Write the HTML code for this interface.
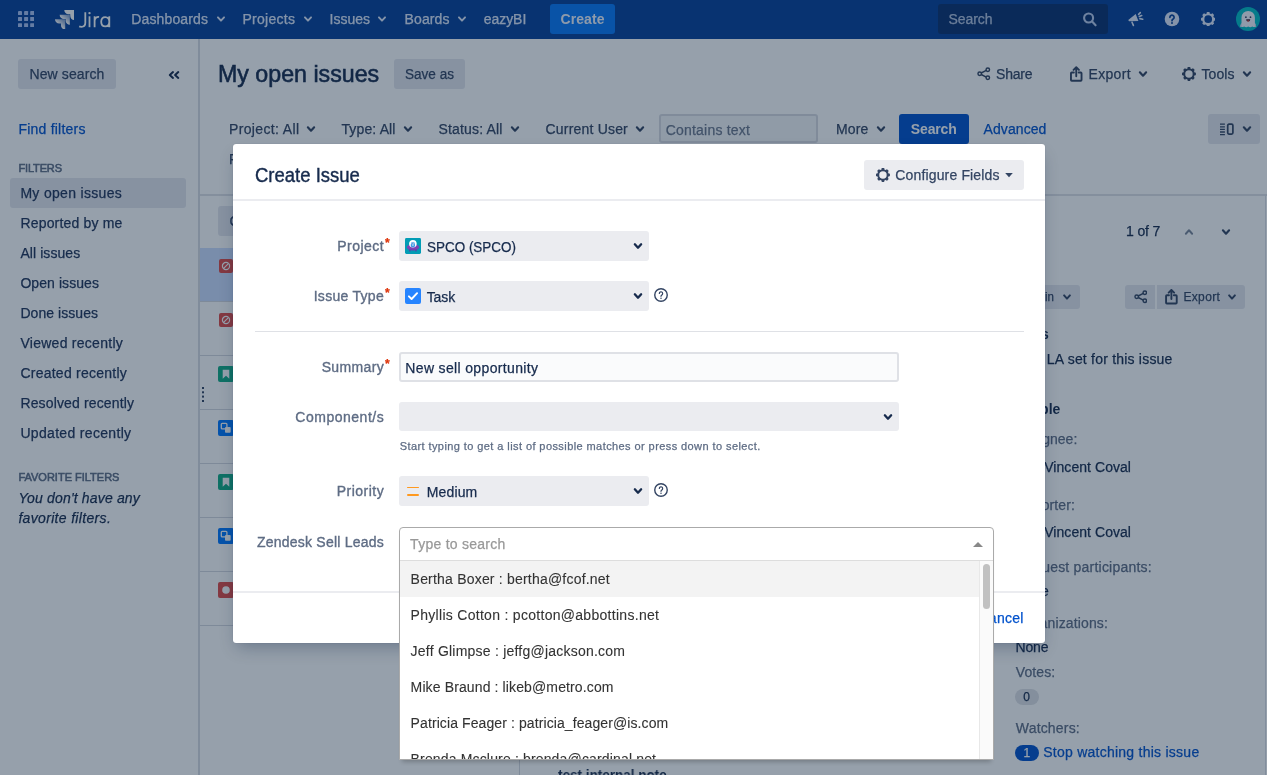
<!DOCTYPE html>
<html><head><meta charset="utf-8"><title>Create Issue - Jira</title>
<style>
*{box-sizing:border-box;margin:0;padding:0}
html,body{width:1267px;height:775px;overflow:hidden;background:#fff}
body{font-family:"Liberation Sans",sans-serif;font-size:14px;color:#172b4d;position:relative}
.t{position:absolute;white-space:nowrap;-webkit-text-stroke:.25px}
.b{position:absolute;display:block}
#page,#fg{will-change:transform}
#blanket{position:absolute;left:0;top:0;width:1267px;height:775px;background:rgba(11,34,60,0.43)}
#dlg{position:absolute;left:233px;top:144px;width:812px;height:498.700px;background:#fff;border-radius:3px;box-shadow:0 8px 16px -4px rgba(9,30,66,.3),0 0 1px rgba(9,30,66,.31)}
#drop{position:absolute;left:399px;top:527px;width:595px;height:232.500px;background:#fff;border:1px solid #aaa;border-radius:4px 4px 0 0;box-shadow:0 5px 4px -3px rgba(0,0,0,.22);overflow:hidden}
</style></head><body>
<div id="page">
<div class="b" style="left:0px;top:0px;width:1267px;height:39px;background:#064099;"></div>
<svg class="b" style="left:18px;top:11px" width="16.2" height="16.2" viewBox="0 0 16.2 16.2" fill="#a9c1f3"><rect x="0" y="0" width="4" height="4" rx=".5"/><rect x="6.1" y="0" width="4" height="4" rx=".5"/><rect x="12.2" y="0" width="4" height="4" rx=".5"/><rect x="0" y="6.1" width="4" height="4" rx=".5"/><rect x="6.1" y="6.1" width="4" height="4" rx=".5"/><rect x="12.2" y="6.1" width="4" height="4" rx=".5"/><rect x="0" y="12.2" width="4" height="4" rx=".5"/><rect x="6.1" y="12.2" width="4" height="4" rx=".5"/><rect x="12.2" y="12.2" width="4" height="4" rx=".5"/></svg>
<svg class="b" style="left:54.7px;top:9.7px" width="19.5" height="19.5" viewBox="0 0 24.013 24" ><defs><linearGradient id="lg1" x1="0.95" y1="0.05" x2="0.45" y2="0.6"><stop offset="0.18" stop-color="#fff" stop-opacity=".55"/><stop offset="1" stop-color="#fff" stop-opacity="1"/></linearGradient></defs><path d="M23.013 0H11.455a5.215 5.215 0 0 0 5.215 5.215h2.129v2.057A5.215 5.215 0 0 0 24.013 12.483V1.005A1.001 1.001 0 0 0 23.013 0z" fill="#fff"/><path d="M17.294 5.757H5.736a5.215 5.215 0 0 0 5.215 5.214h2.129v2.058a5.218 5.218 0 0 0 5.215 5.214V6.758a1.001 1.001 0 0 0-1.001-1.001z" fill="url(#lg1)"/><path d="M11.571 11.513H0a5.218 5.218 0 0 0 5.232 5.215h2.130v2.057A5.215 5.215 0 0 0 12.575 24V12.518a1.005 1.005 0 0 0-1.005-1.005z" fill="url(#lg1)"/></svg>
<svg class="b" style="left:78px;top:9.8px" width="34" height="20" viewBox="0 0 34 20" ><g fill="none" stroke="#fff" stroke-width="1.800" stroke-linecap="butt"><path d="M7.300 2.300v10.500c0 2.600-1.500 4-3.800 4-.9 0-1.700-.1-2.300-.400"/><path d="M11.500 6.300v10.900"/><path d="M16.600 6.300v10.900M16.600 10.700c.400-2.600 2-4 4.500-3.800"/><path d="M31.300 6.300v10.900M31.300 11.800c0-2.900-1.600-4.700-4-4.700s-4.100 1.900-4.100 4.700 1.700 4.600 4.100 4.600 4-1.800 4-4.600z"/></g><circle cx="11.500" cy="3.100" r="1.200" fill="#fff"/></svg>
<div class="t" style="left:131.3px;top:9.2px;font-size:14px;line-height:20px;color:#dfe9fb;letter-spacing:0.133px;">Dashboards</div>
<svg class="b" style="left:213px;top:12.85px" width="16" height="12" viewBox="-8 -6 16 12" ><path d="M-3.05 -1.65L0 1.65L3.05 -1.65" fill="none" stroke="#dfe9fb" stroke-width="1.9" stroke-linecap="round" stroke-linejoin="round"/></svg>
<div class="t" style="left:242.4px;top:9.2px;font-size:14px;line-height:20px;color:#dfe9fb;letter-spacing:0.275px;">Projects</div>
<svg class="b" style="left:299.6px;top:12.85px" width="16" height="12" viewBox="-8 -6 16 12" ><path d="M-3.05 -1.65L0 1.65L3.05 -1.65" fill="none" stroke="#dfe9fb" stroke-width="1.9" stroke-linecap="round" stroke-linejoin="round"/></svg>
<div class="t" style="left:329.6px;top:9.2px;font-size:14px;line-height:20px;color:#dfe9fb;">Issues</div>
<svg class="b" style="left:374.4px;top:12.85px" width="16" height="12" viewBox="-8 -6 16 12" ><path d="M-3.05 -1.65L0 1.65L3.05 -1.65" fill="none" stroke="#dfe9fb" stroke-width="1.9" stroke-linecap="round" stroke-linejoin="round"/></svg>
<div class="t" style="left:404.6px;top:9.2px;font-size:14px;line-height:20px;color:#dfe9fb;letter-spacing:0.088px;">Boards</div>
<svg class="b" style="left:454px;top:12.85px" width="16" height="12" viewBox="-8 -6 16 12" ><path d="M-3.05 -1.65L0 1.65L3.05 -1.65" fill="none" stroke="#dfe9fb" stroke-width="1.9" stroke-linecap="round" stroke-linejoin="round"/></svg>
<div class="t" style="left:483.7px;top:9.2px;font-size:14px;line-height:20px;color:#dfe9fb;letter-spacing:-0.043px;">eazyBI</div>
<div class="b" style="left:550px;top:4px;width:65px;height:30px;background:#0878f8;border-radius:3px"></div>
<div class="t" style="left:560.6px;top:9.2px;font-size:14px;line-height:20px;color:#f0f5ff;font-weight:bold;-webkit-text-stroke:0;letter-spacing:0.061px;">Create</div>
<div class="b" style="left:938px;top:4px;width:170px;height:30px;background:#0a316f;border-radius:3px"></div>
<div class="t" style="left:948.4px;top:9.2px;font-size:14px;line-height:20px;color:#b4c4e0;letter-spacing:-0.052px;">Search</div>
<svg class="b" style="left:1082px;top:11px" width="16" height="16" viewBox="0 0 16 16" ><g fill="none" stroke="#b9caec" stroke-width="2.100" stroke-linecap="round"><circle cx="6.600" cy="7" r="4.500"/><path d="M10.100 10.500l3.500 3.800"/></g></svg>
<svg class="b" style="left:1124px;top:6px" width="26" height="26" viewBox="1124 6 26 26" ><path d="M1129.200 19.300L1135.700 14l2.700 6.900-9.200.300a.7.700 0 0 1-.700-.700v-.600a.7.700 0 0 1 .700-.600z" fill="#dfe9fb"/><g stroke="#dfe9fb" stroke-width="1.600" stroke-linecap="round" fill="none"><path d="M1132 22.200l1.400 3.200"/><path d="M1138.600 14.400l1.700-1.800M1139.300 16.500l2.400-.900M1139.900 18.600l2.800.700"/></g></svg>
<svg class="b" style="left:1164px;top:11px" width="16" height="16" viewBox="0 0 16 16" ><circle cx="8" cy="8" r="7.300" fill="#dfe9fb"/><path d="M5.900 6.300a2.100 2.100 0 1 1 3.200 1.800c-.7.400-1.100.8-1.100 1.600" fill="none" stroke="#064099" stroke-width="1.700" stroke-linecap="round"/><circle cx="8" cy="12" r="1" fill="#064099"/></svg>
<svg class="b" style="left:1200.8px;top:11.8px" width="14.4" height="14.4" viewBox="-7 -7 14 14" ><circle r="4.800" fill="none" stroke="#dfe9fb" stroke-width="2.100"/><g fill="#dfe9fb"><rect x="-1.4" y="-7" width="2.800" height="2.400" rx=".6" transform="rotate(0)"/><rect x="-1.4" y="-7" width="2.800" height="2.400" rx=".6" transform="rotate(45)"/><rect x="-1.4" y="-7" width="2.800" height="2.400" rx=".6" transform="rotate(90)"/><rect x="-1.4" y="-7" width="2.800" height="2.400" rx=".6" transform="rotate(135)"/><rect x="-1.4" y="-7" width="2.800" height="2.400" rx=".6" transform="rotate(180)"/><rect x="-1.4" y="-7" width="2.800" height="2.400" rx=".6" transform="rotate(225)"/><rect x="-1.4" y="-7" width="2.800" height="2.400" rx=".6" transform="rotate(270)"/><rect x="-1.4" y="-7" width="2.800" height="2.400" rx=".6" transform="rotate(315)"/></g></svg>
<svg class="b" style="left:1236px;top:7px" width="24" height="24" viewBox="0 0 24 24" ><circle cx="12" cy="12" r="12" fill="#00bfc6"/><path d="M4.200 19.600c.300-1.600.800-2.600 1.300-3.500V10.600a6.700 6.700 0 0 1 13.400 0v5.500c.500.900 1 1.900 1.300 3.500-1.300.700-2.600.700-3.900-.100-1.400.900-2.700.900-4.100 0-1.400.900-2.700.900-4.100 0-1.300.800-2.600.800-3.900.100z" fill="#f4f6fd"/><path d="M4.200 19.600c.300-1.600.800-2.600 1.300-3.500v2.700c0 .5.100.8.300 1.100-.5.100-1.100 0-1.600-.300zM20.200 19.600c-.300-1.600-.800-2.600-1.300-3.500v2.700c0 .5-.100.8-.300 1.100.5.100 1.100 0 1.600-.300z" fill="#c5d0e8"/><circle cx="9.900" cy="10.200" r=".85" fill="#2b3a5c"/><circle cx="14.500" cy="10.200" r=".85" fill="#2b3a5c"/><path d="M10.100 12.300h4.200a2.100 2.200 0 0 1-4.200 0z" fill="#3a2238"/><path d="M10.900 13.900a1.700 1.700 0 0 1 2.600 0 2.100 2.100 0 0 1-2.600 0z" fill="#ff4d3d"/></svg>
<div class="b" style="left:198px;top:39px;width:2px;height:736px;background:#d9dce3;"></div>
<div class="b" style="left:18px;top:59px;width:98px;height:30px;background:#e5e7ee;border-radius:3px"></div>
<div class="t" style="left:29.5px;top:64.2px;font-size:14px;line-height:20px;color:#344563;letter-spacing:0.098px;">New search</div>
<svg class="b" style="left:168px;top:68.7px" width="12" height="12" viewBox="0 0 12 12" ><path d="M5 3.100L1.800 6l3.200 2.900M10.300 3.100L7.100 6l3.200 2.900" fill="none" stroke="#172b4d" stroke-width="2" stroke-linecap="round" stroke-linejoin="round"/></svg>
<div class="t" style="left:18.4px;top:119.2px;font-size:14px;line-height:20px;color:#0052cc;letter-spacing:0.229px;">Find filters</div>
<div class="t" style="left:18.4px;top:161.1px;font-size:11px;line-height:14px;color:#5e6c84;-webkit-text-stroke:.55px;letter-spacing:-0.137px;">FILTERS</div>
<div class="b" style="left:10px;top:178px;width:176px;height:30px;background:#e5e7ee;border-radius:3px"></div>
<div class="t" style="left:20.4px;top:183.2px;font-size:14px;line-height:20px;color:#22355a;letter-spacing:0.317px;">My open issues</div>
<div class="t" style="left:20.4px;top:213.2px;font-size:14px;line-height:20px;color:#22355a;letter-spacing:0.184px;">Reported by me</div>
<div class="t" style="left:20.4px;top:243.2px;font-size:14px;line-height:20px;color:#22355a;letter-spacing:0.073px;">All issues</div>
<div class="t" style="left:20.4px;top:273.2px;font-size:14px;line-height:20px;color:#22355a;letter-spacing:0.077px;">Open issues</div>
<div class="t" style="left:20.4px;top:303.2px;font-size:14px;line-height:20px;color:#22355a;letter-spacing:0.055px;">Done issues</div>
<div class="t" style="left:20.4px;top:333.2px;font-size:14px;line-height:20px;color:#22355a;letter-spacing:0.273px;">Viewed recently</div>
<div class="t" style="left:20.4px;top:363.2px;font-size:14px;line-height:20px;color:#22355a;letter-spacing:0.245px;">Created recently</div>
<div class="t" style="left:20.4px;top:393.2px;font-size:14px;line-height:20px;color:#22355a;letter-spacing:0.145px;">Resolved recently</div>
<div class="t" style="left:20.4px;top:423.2px;font-size:14px;line-height:20px;color:#22355a;letter-spacing:0.324px;">Updated recently</div>
<div class="t" style="left:18.4px;top:469.9px;font-size:11px;line-height:14px;color:#5e6c84;-webkit-text-stroke:.55px;">FAVORITE FILTERS</div>
<div class="t" style="left:18.4px;top:488.2px;font-size:14px;line-height:20px;color:#172b4d;font-style:italic;letter-spacing:0.160px;">You don't have any</div>
<div class="t" style="left:18.4px;top:507.8px;font-size:14px;line-height:20px;color:#172b4d;font-style:italic;letter-spacing:0.329px;">favorite filters.</div>
<div class="t" style="left:218.2px;top:59.4px;font-size:24px;line-height:30px;color:#172b4d;-webkit-text-stroke:.6px;transform:scaleX(0.9667);transform-origin:0 50%;">My open issues</div>
<div class="b" style="left:394.2px;top:59px;width:70.6px;height:30px;background:#e5e7ee;border-radius:3px"></div>
<div class="t" style="left:405px;top:64.2px;font-size:14px;line-height:20px;color:#344563;transform:scaleX(0.9685);transform-origin:0 50%;">Save as</div>
<svg class="b" style="left:977px;top:67.3px" width="13.5" height="13.5" viewBox="0 0 14 14" ><g fill="none" stroke="#344563" stroke-width="1.500"><circle cx="2.800" cy="7" r="1.800"/><circle cx="11.200" cy="2.800" r="1.800"/><circle cx="11.200" cy="11.200" r="1.800"/><path d="M4.400 6.200l5.200-2.600M4.400 7.800l5.200 2.600"/></g></svg>
<div class="t" style="left:996px;top:64.2px;font-size:14px;line-height:20px;color:#344563;letter-spacing:-0.190px;">Share</div>
<svg class="b" style="left:1070px;top:66px" width="12.5" height="16" viewBox="0 0 13 16" ><g fill="none" stroke="#344563" stroke-width="1.950" stroke-linecap="round" stroke-linejoin="round"><path d="M6.500 1.300v9M3.700 3.800L6.500 1l2.800 2.800"/><path d="M4 6.500H1.800a.8.800 0 0 0-.800.800v6.900a.8.800 0 0 0 .800.800h9.400a.8.800 0 0 0 .800-.800V7.300a.8.800 0 0 0-.800-.800H9"/></g></svg>
<div class="t" style="left:1088.5px;top:64.2px;font-size:14px;line-height:20px;color:#344563;letter-spacing:0.326px;">Export</div>
<svg class="b" style="left:1135.3px;top:68px" width="16" height="12" viewBox="-8 -6 16 12" ><path d="M-3.15 -1.75L0 1.75L3.15 -1.75" fill="none" stroke="#344563" stroke-width="2.1" stroke-linecap="round" stroke-linejoin="round"/></svg>
<svg class="b" style="left:1181.7px;top:67.1px" width="13.9" height="13.9" viewBox="-7 -7 14 14" ><circle r="4.800" fill="none" stroke="#344563" stroke-width="2.100"/><g fill="#344563"><rect x="-1.4" y="-7" width="2.800" height="2.400" rx=".6" transform="rotate(0)"/><rect x="-1.4" y="-7" width="2.800" height="2.400" rx=".6" transform="rotate(45)"/><rect x="-1.4" y="-7" width="2.800" height="2.400" rx=".6" transform="rotate(90)"/><rect x="-1.4" y="-7" width="2.800" height="2.400" rx=".6" transform="rotate(135)"/><rect x="-1.4" y="-7" width="2.800" height="2.400" rx=".6" transform="rotate(180)"/><rect x="-1.4" y="-7" width="2.800" height="2.400" rx=".6" transform="rotate(225)"/><rect x="-1.4" y="-7" width="2.800" height="2.400" rx=".6" transform="rotate(270)"/><rect x="-1.4" y="-7" width="2.800" height="2.400" rx=".6" transform="rotate(315)"/></g></svg>
<div class="t" style="left:1201.4px;top:64.2px;font-size:14px;line-height:20px;color:#344563;letter-spacing:0.103px;">Tools</div>
<svg class="b" style="left:1239px;top:68px" width="16" height="12" viewBox="-8 -6 16 12" ><path d="M-3.15 -1.75L0 1.75L3.15 -1.75" fill="none" stroke="#344563" stroke-width="2.1" stroke-linecap="round" stroke-linejoin="round"/></svg>
<div class="t" style="left:229px;top:119px;font-size:14px;line-height:20px;color:#344563;letter-spacing:0.351px;">Project: All</div>
<svg class="b" style="left:302.6px;top:122.9px" width="16" height="12" viewBox="-8 -6 16 12" ><path d="M-3.15 -1.75L0 1.75L3.15 -1.75" fill="none" stroke="#344563" stroke-width="2.1" stroke-linecap="round" stroke-linejoin="round"/></svg>
<div class="t" style="left:341.4px;top:119px;font-size:14px;line-height:20px;color:#344563;letter-spacing:0.147px;">Type: All</div>
<svg class="b" style="left:400px;top:122.9px" width="16" height="12" viewBox="-8 -6 16 12" ><path d="M-3.15 -1.75L0 1.75L3.15 -1.75" fill="none" stroke="#344563" stroke-width="2.1" stroke-linecap="round" stroke-linejoin="round"/></svg>
<div class="t" style="left:438.4px;top:119px;font-size:14px;line-height:20px;color:#344563;letter-spacing:0.183px;">Status: All</div>
<svg class="b" style="left:506.6px;top:122.9px" width="16" height="12" viewBox="-8 -6 16 12" ><path d="M-3.15 -1.75L0 1.75L3.15 -1.75" fill="none" stroke="#344563" stroke-width="2.1" stroke-linecap="round" stroke-linejoin="round"/></svg>
<div class="t" style="left:545.5px;top:119px;font-size:14px;line-height:20px;color:#344563;letter-spacing:0.196px;">Current User</div>
<svg class="b" style="left:632px;top:122.9px" width="16" height="12" viewBox="-8 -6 16 12" ><path d="M-3.15 -1.75L0 1.75L3.15 -1.75" fill="none" stroke="#344563" stroke-width="2.1" stroke-linecap="round" stroke-linejoin="round"/></svg>
<div class="t" style="left:836px;top:119px;font-size:14px;line-height:20px;color:#344563;letter-spacing:0.098px;">More</div>
<svg class="b" style="left:872.6px;top:122.9px" width="16" height="12" viewBox="-8 -6 16 12" ><path d="M-3.15 -1.75L0 1.75L3.15 -1.75" fill="none" stroke="#344563" stroke-width="2.1" stroke-linecap="round" stroke-linejoin="round"/></svg>
<div class="b" style="left:659.2px;top:114.4px;width:158.4px;height:28.8px;background:#f5f6f8;border:2px solid #d8dbe2;border-radius:3px"></div>
<div class="t" style="left:665.7px;top:119.6px;font-size:14px;line-height:20px;color:#6b778c;letter-spacing:0.207px;">Contains text</div>
<div class="b" style="left:899.3px;top:114px;width:69.5px;height:30px;background:#0052cc;border-radius:3px"></div>
<div class="t" style="left:910.8px;top:119px;font-size:14px;line-height:20px;color:#fff;font-weight:bold;-webkit-text-stroke:0;letter-spacing:-0.141px;">Search</div>
<div class="t" style="left:983.6px;top:119px;font-size:14px;line-height:20px;color:#0052cc;letter-spacing:0.074px;">Advanced</div>
<div class="b" style="left:1208.2px;top:114.2px;width:51.8px;height:29.5px;background:#e5e7ee;border-radius:3px"></div>
<svg class="b" style="left:1219.8px;top:122px" width="15" height="14" viewBox="0 0 15 14" ><g fill="none" stroke="#344563"><path d="M0 2.200h4.900M0 4.800h4.900M0 7.400h4.900M0 10h4.900M0 12.600h4.900" stroke-width="1.300"/><rect x="7.700" y="2.100" width="5.200" height="10" rx="1.300" stroke-width="1.700"/></g></svg>
<svg class="b" style="left:1239px;top:122.8px" width="16" height="12" viewBox="-8 -6 16 12" ><path d="M-3.15 -1.75L0 1.75L3.15 -1.75" fill="none" stroke="#344563" stroke-width="2.1" stroke-linecap="round" stroke-linejoin="round"/></svg>
<div class="t" style="left:229px;top:148.5px;font-size:14px;line-height:20px;color:#344563;">Filters</div>
<div class="b" style="left:200px;top:194px;width:1067px;height:1.7px;background:#dfe1e6;"></div>
<div class="b" style="left:218px;top:206px;width:110px;height:29.5px;background:#e5e7ee;border-radius:3px"></div>
<div class="t" style="left:229.4px;top:210.5px;font-size:14px;line-height:20px;color:#344563;">Created</div>
<div class="b" style="left:200px;top:248px;width:319px;height:53.5px;background:#cddeff;"></div>
<div class="b" style="left:200px;top:301px;width:319px;height:1px;background:#d5d9e0;"></div>
<div class="b" style="left:200px;top:354.9px;width:319px;height:1px;background:#d5d9e0;"></div>
<div class="b" style="left:200px;top:408.7px;width:319px;height:1px;background:#d5d9e0;"></div>
<div class="b" style="left:200px;top:462.8px;width:319px;height:1px;background:#d5d9e0;"></div>
<div class="b" style="left:200px;top:516.7px;width:319px;height:1px;background:#d5d9e0;"></div>
<div class="b" style="left:200px;top:570.7px;width:319px;height:1px;background:#d5d9e0;"></div>
<div class="b" style="left:200px;top:624.5px;width:319px;height:1px;background:#d5d9e0;"></div>
<div class="b" style="left:519px;top:194px;width:1px;height:581px;background:#d5d9e0;"></div>
<svg class="b" style="left:219px;top:259px" width="14" height="14" viewBox="0 0 14 14" ><rect width="14" height="14" rx="2" fill="#df4a47"/><circle cx="7" cy="7" r="3.600" fill="none" stroke="#fff" stroke-width="1.200"/><path d="M4.600 9.400l4.800-4.800" stroke="#fff" stroke-width="1.200"/></svg>
<svg class="b" style="left:219px;top:313px" width="14" height="14" viewBox="0 0 14 14" ><rect width="14" height="14" rx="2" fill="#df4a47"/><circle cx="7" cy="7" r="3.600" fill="none" stroke="#fff" stroke-width="1.200"/><path d="M4.600 9.400l4.800-4.800" stroke="#fff" stroke-width="1.200"/></svg>
<svg class="b" style="left:218px;top:366px" width="16" height="16" viewBox="0 0 16 16" ><rect width="16" height="16" rx="2" fill="#12ad85"/><path d="M4.700 3.700h6.600v9L8 9.700l-3.300 3z" fill="#fff"/></svg>
<svg class="b" style="left:218px;top:420px" width="16" height="16" viewBox="0 0 16 16" ><rect width="16" height="16" rx="2" fill="#0078ff"/><rect x="3.300" y="3.300" width="5.600" height="5.600" rx=".9" fill="none" stroke="#fff" stroke-width="1.300"/><rect x="7" y="7" width="5.700" height="5.700" rx=".9" fill="#fff"/></svg>
<svg class="b" style="left:218px;top:474px" width="16" height="16" viewBox="0 0 16 16" ><rect width="16" height="16" rx="2" fill="#12ad85"/><path d="M4.700 3.700h6.600v9L8 9.700l-3.300 3z" fill="#fff"/></svg>
<svg class="b" style="left:218px;top:528px" width="16" height="16" viewBox="0 0 16 16" ><rect width="16" height="16" rx="2" fill="#0078ff"/><rect x="3.300" y="3.300" width="5.600" height="5.600" rx=".9" fill="none" stroke="#fff" stroke-width="1.300"/><rect x="7" y="7" width="5.700" height="5.700" rx=".9" fill="#fff"/></svg>
<svg class="b" style="left:218px;top:582px" width="16" height="16" viewBox="0 0 16 16" ><rect width="16" height="16" rx="2" fill="#df4a47"/><circle cx="8" cy="8" r="3.800" fill="#fff"/></svg>
<div class="b" style="left:202px;top:387px;width:2px;height:2px;background:#344563;box-shadow:0 4.300px 0 #344563,0 8.600px 0 #344563,0 13px 0 #344563"></div>
<div class="t" style="left:1126px;top:221px;font-size:14px;line-height:20px;color:#172b4d;letter-spacing:-0.126px;">1 of 7</div>
<svg class="b" style="left:1181px;top:226.3px" width="16" height="12" viewBox="-8 -6 16 12" ><path d="M-3.15 1.75L0 -1.75L3.15 1.75" fill="none" stroke="#7a869a" stroke-width="1.9" stroke-linecap="round" stroke-linejoin="round"/></svg>
<svg class="b" style="left:1217.8px;top:226.1px" width="16" height="12" viewBox="-8 -6 16 12" ><path d="M-3.1 -1.75L0 1.75L3.1 -1.75" fill="none" stroke="#344563" stroke-width="2.1" stroke-linecap="round" stroke-linejoin="round"/></svg>
<div class="b" style="left:990px;top:285px;width:90px;height:23.5px;background:#e5e7ee;border-radius:3px"></div>
<div class="t" style="left:1045.3px;top:289.2px;font-size:12px;line-height:16px;color:#344563;transform:scaleX(0.9632);transform-origin:0 50%;">in</div>
<svg class="b" style="left:1059px;top:290.75px" width="16" height="12" viewBox="-8 -6 16 12" ><path d="M-2.9 -1.6L0 1.6L2.9 -1.6" fill="none" stroke="#344563" stroke-width="2" stroke-linecap="round" stroke-linejoin="round"/></svg>
<div class="b" style="left:1125px;top:285px;width:30px;height:23.5px;background:#e5e7ee;border-radius:3px 0 0 3px"></div>
<svg class="b" style="left:1133.8px;top:290px" width="13.5" height="13.5" viewBox="0 0 14 14" ><g fill="none" stroke="#344563" stroke-width="1.500"><circle cx="2.800" cy="7" r="1.800"/><circle cx="11.200" cy="2.800" r="1.800"/><circle cx="11.200" cy="11.200" r="1.800"/><path d="M4.400 6.200l5.200-2.600M4.400 7.800l5.200 2.600"/></g></svg>
<div class="b" style="left:1156.8px;top:285px;width:88px;height:23.5px;background:#e5e7ee;border-radius:0 3px 3px 0"></div>
<svg class="b" style="left:1165px;top:289.3px" width="12.8" height="15.5" viewBox="0 0 13 16" ><g fill="none" stroke="#344563" stroke-width="1.950" stroke-linecap="round" stroke-linejoin="round"><path d="M6.500 1.300v9M3.700 3.800L6.500 1l2.800 2.800"/><path d="M4 6.500H1.800a.8.800 0 0 0-.800.800v6.900a.8.800 0 0 0 .800.800h9.400a.8.800 0 0 0 .800-.800V7.300a.8.800 0 0 0-.800-.800H9"/></g></svg>
<div class="t" style="left:1183.4px;top:289.2px;font-size:12px;line-height:16px;color:#344563;letter-spacing:0.362px;">Export</div>
<svg class="b" style="left:1223.8px;top:290.75px" width="16" height="12" viewBox="-8 -6 16 12" ><path d="M-2.9 -1.6L0 1.6L2.9 -1.6" fill="none" stroke="#344563" stroke-width="2" stroke-linecap="round" stroke-linejoin="round"/></svg>
<div class="t" style="left:1012px;top:323.9px;font-size:14px;line-height:20px;color:#172b4d;font-weight:bold;-webkit-text-stroke:0;letter-spacing:0.368px;">SLAs</div>
<div class="t" style="left:1046.8px;top:348.8px;font-size:14px;line-height:20px;color:#172b4d;letter-spacing:0.210px;">LA set for this issue</div>
<div class="t" style="left:1014.5px;top:399px;font-size:14px;line-height:20px;color:#172b4d;font-weight:bold;-webkit-text-stroke:0;letter-spacing:-0.021px;">People</div>
<div class="t" style="left:1015.8px;top:429.3px;font-size:14px;line-height:20px;color:#5e6c84;">Assignee:</div>
<div class="t" style="left:1044.2px;top:456.8px;font-size:14px;line-height:20px;color:#172b4d;letter-spacing:0.055px;">Vincent Coval</div>
<div class="t" style="left:1015.8px;top:494.5px;font-size:14px;line-height:20px;color:#5e6c84;letter-spacing:0.080px;">Reporter:</div>
<div class="t" style="left:1044.2px;top:521.8px;font-size:14px;line-height:20px;color:#172b4d;letter-spacing:0.055px;">Vincent Coval</div>
<div class="t" style="left:1015.8px;top:556.8px;font-size:14px;line-height:20px;color:#5e6c84;letter-spacing:0.218px;">Request participants:</div>
<div class="t" style="left:1015.4px;top:581.3px;font-size:14px;line-height:20px;color:#172b4d;">None</div>
<div class="t" style="left:1015.8px;top:613px;font-size:14px;line-height:20px;color:#5e6c84;letter-spacing:0.140px;">Organizations:</div>
<div class="t" style="left:1015.4px;top:637.3px;font-size:14px;line-height:20px;color:#172b4d;letter-spacing:-0.123px;">None</div>
<div class="t" style="left:1015.8px;top:661.8px;font-size:14px;line-height:20px;color:#5e6c84;letter-spacing:0.096px;">Votes:</div>
<div class="b" style="left:1015.2px;top:689px;width:23.8px;height:15.8px;background:#dfe1e6;border-radius:8px"></div>
<div class="t" style="left:1023.2px;top:688.8px;font-size:12px;line-height:16px;color:#172b4d;">0</div>
<div class="t" style="left:1015.8px;top:717.8px;font-size:14px;line-height:20px;color:#5e6c84;letter-spacing:0.175px;">Watchers:</div>
<div class="b" style="left:1015.2px;top:745px;width:23.8px;height:15.9px;background:#0052cc;border-radius:8px"></div>
<div class="t" style="left:1023.4px;top:744.8px;font-size:12px;line-height:16px;color:#fff;">1</div>
<div class="t" style="left:1043.2px;top:742px;font-size:14px;line-height:20px;color:#0052cc;letter-spacing:0.252px;">Stop watching this issue</div>
<div class="t" style="left:558.3px;top:764.5px;font-size:14px;line-height:20px;color:#172b4d;font-weight:bold;-webkit-text-stroke:0;transform:scaleX(0.9637);transform-origin:0 50%;">test internal note</div>
<div class="b" style="left:1265px;top:195px;width:1px;height:580px;background:#dcdfe6;"></div>
</div>
<div id="blanket"></div>
<div id="fg">
<div id="dlg"></div>
<div class="t" style="left:254.9px;top:160.1px;font-size:20px;line-height:30px;color:#172b4d;-webkit-text-stroke:.4px;transform:scaleX(0.9251);transform-origin:0 50%;">Create Issue</div>
<div class="b" style="left:864px;top:160.2px;width:160px;height:29.5px;background:#ebecf0;border-radius:3px"></div>
<svg class="b" style="left:876px;top:168.2px" width="13.9" height="13.9" viewBox="-7 -7 14 14" ><circle r="4.800" fill="none" stroke="#344563" stroke-width="2.100"/><g fill="#344563"><rect x="-1.4" y="-7" width="2.800" height="2.400" rx=".6" transform="rotate(0)"/><rect x="-1.4" y="-7" width="2.800" height="2.400" rx=".6" transform="rotate(45)"/><rect x="-1.4" y="-7" width="2.800" height="2.400" rx=".6" transform="rotate(90)"/><rect x="-1.4" y="-7" width="2.800" height="2.400" rx=".6" transform="rotate(135)"/><rect x="-1.4" y="-7" width="2.800" height="2.400" rx=".6" transform="rotate(180)"/><rect x="-1.4" y="-7" width="2.800" height="2.400" rx=".6" transform="rotate(225)"/><rect x="-1.4" y="-7" width="2.800" height="2.400" rx=".6" transform="rotate(270)"/><rect x="-1.4" y="-7" width="2.800" height="2.400" rx=".6" transform="rotate(315)"/></g></svg>
<div class="t" style="left:895.3px;top:165px;font-size:14px;line-height:20px;color:#344563;letter-spacing:0.151px;">Configure Fields</div>
<svg class="b" style="left:1004px;top:171px" width="10" height="8" viewBox="1004 171 10 8" ><path d="M1005.200 173.100h7.600l-3.800 4.100z" fill="#344563"/></svg>
<div class="b" style="left:233px;top:199.2px;width:812px;height:1.7px;background:#ebecf0;"></div>
<div class="t" style="left:337.3px;top:236px;font-size:14px;line-height:20px;color:#5e6c84;-webkit-text-stroke:.35px;letter-spacing:0.470px;">Project</div>
<div class="t" style="left:385px;top:235.5px;font-size:12px;line-height:14px;color:#de350b;font-weight:bold;">*</div>
<div class="b" style="left:399px;top:231.3px;width:250px;height:29.5px;background:#ebecf0;border-radius:3px"></div>
<svg class="b" style="left:405px;top:238px" width="16" height="16" viewBox="0 0 16 16" ><rect width="16" height="16" rx="1.400" fill="#029cb5"/><rect x="4.200" y="11.300" width="1.300" height="2.100" rx=".5" fill="#5b3aa6"/><rect x="10.300" y="11.300" width="1.300" height="2.100" rx=".5" fill="#5b3aa6"/><ellipse cx="8" cy="9.200" rx="6.100" ry="3.200" fill="#7d43b4"/><path d="M2.300 10.300a6.100 3.200 0 0 0 11.400 0 6.100 2.300 0 0 1-11.400 0z" fill="#6a36a8"/><circle cx="7.900" cy="5.700" r="3.800" fill="#fdfdff"/><path d="M5.800 6.400a2.100 2.300 0 0 1 4.200 0v1.300a2.100 1.600 0 0 1-4.200 0z" fill="#3f9ae6"/><ellipse cx="7.900" cy="5.500" rx="1.500" ry="1.200" fill="#8cc4f5"/><ellipse cx="7.700" cy="5.600" rx=".6" ry=".45" fill="#6b6f8a"/><rect x="7" y="6.800" width="1.800" height=".8" rx=".3" fill="#e8f3fd"/></svg>
<div class="t" style="left:426.7px;top:236.6px;font-size:14px;line-height:20px;color:#172b4d;transform:scaleX(0.9614);transform-origin:0 50%;">SPCO (SPCO)</div>
<svg class="b" style="left:630px;top:239.7px" width="16" height="12" viewBox="-8 -6 16 12" ><path d="M-3.15 -1.75L0 1.75L3.15 -1.75" fill="none" stroke="#172b4d" stroke-width="2.3" stroke-linecap="round" stroke-linejoin="round"/></svg>
<div class="t" style="left:313.7px;top:286px;font-size:14px;line-height:20px;color:#5e6c84;-webkit-text-stroke:.35px;letter-spacing:0.283px;">Issue Type</div>
<div class="t" style="left:385px;top:285.5px;font-size:12px;line-height:14px;color:#de350b;font-weight:bold;">*</div>
<div class="b" style="left:399px;top:281.3px;width:250px;height:29.5px;background:#ebecf0;border-radius:3px"></div>
<svg class="b" style="left:405px;top:288px" width="16" height="16" viewBox="0 0 16 16" ><rect width="16" height="16" rx="2" fill="#2684ff"/><path d="M3.900 8.300l2.700 2.700 5.500-5.800" fill="none" stroke="#fff" stroke-width="1.900" stroke-linecap="round" stroke-linejoin="round"/></svg>
<div class="t" style="left:426.7px;top:286.6px;font-size:14px;line-height:20px;color:#172b4d;letter-spacing:-0.066px;">Task</div>
<svg class="b" style="left:630px;top:289.85px" width="16" height="12" viewBox="-8 -6 16 12" ><path d="M-3.15 -1.75L0 1.75L3.15 -1.75" fill="none" stroke="#172b4d" stroke-width="2.3" stroke-linecap="round" stroke-linejoin="round"/></svg>
<svg class="b" style="left:652.8px;top:287px" width="16" height="16" viewBox="-8 -8 16 16" ><g fill="none" stroke="#344563" stroke-width="1.400" stroke-linecap="round"><circle r="6.250"/><path d="M-1.650 -1.500a1.650 1.650 0 1 1 2.500 1.400c-.6.350-.85.700-.85 1.400" stroke-width="1.200"/></g><circle cy="3.300" r=".75" fill="#344563"/></svg>
<div class="b" style="left:254.5px;top:331.2px;width:769.5px;height:1px;background:#dfe1e6;"></div>
<div class="t" style="left:321.7px;top:357px;font-size:14px;line-height:20px;color:#5e6c84;-webkit-text-stroke:.35px;letter-spacing:0.349px;">Summary</div>
<div class="t" style="left:385px;top:356.5px;font-size:12px;line-height:14px;color:#de350b;font-weight:bold;">*</div>
<div class="b" style="left:399px;top:352.3px;width:500px;height:29.5px;background:#fafbfc;border:2px solid #dfe1e6;border-radius:3px"></div>
<div class="t" style="left:405.3px;top:357.6px;font-size:14px;line-height:20px;color:#172b4d;letter-spacing:0.349px;">New sell opportunity</div>
<div class="t" style="left:295.3px;top:407.3px;font-size:14px;line-height:20px;color:#5e6c84;-webkit-text-stroke:.35px;letter-spacing:0.512px;">Component/s</div>
<div class="b" style="left:399px;top:402.3px;width:500px;height:29px;background:#ebecf0;border-radius:3px"></div>
<svg class="b" style="left:880.3px;top:410.6px" width="16" height="12" viewBox="-8 -6 16 12" ><path d="M-3.15 -1.75L0 1.75L3.15 -1.75" fill="none" stroke="#172b4d" stroke-width="2.3" stroke-linecap="round" stroke-linejoin="round"/></svg>
<div class="t" style="left:399.7px;top:439px;font-size:11px;line-height:14px;color:#5e6c84;letter-spacing:0.417px;">Start typing to get a list of possible matches or press down to select.</div>
<div class="t" style="left:336.7px;top:481px;font-size:14px;line-height:20px;color:#5e6c84;-webkit-text-stroke:.35px;letter-spacing:0.491px;">Priority</div>
<div class="b" style="left:399px;top:476.3px;width:250px;height:29.5px;background:#ebecf0;border-radius:3px"></div>
<div class="b" style="left:407.3px;top:486.5px;width:11.4px;height:1.8px;background:#ff991f;border-radius:1px"></div>
<div class="b" style="left:407.3px;top:493.9px;width:11.4px;height:1.8px;background:#ff991f;border-radius:1px"></div>
<div class="t" style="left:426.7px;top:481.6px;font-size:14px;line-height:20px;color:#172b4d;letter-spacing:0.161px;">Medium</div>
<svg class="b" style="left:630px;top:484.9px" width="16" height="12" viewBox="-8 -6 16 12" ><path d="M-3.15 -1.75L0 1.75L3.15 -1.75" fill="none" stroke="#172b4d" stroke-width="2.3" stroke-linecap="round" stroke-linejoin="round"/></svg>
<svg class="b" style="left:652.8px;top:482.2px" width="16" height="16" viewBox="-8 -8 16 16" ><g fill="none" stroke="#344563" stroke-width="1.400" stroke-linecap="round"><circle r="6.250"/><path d="M-1.650 -1.500a1.650 1.650 0 1 1 2.500 1.400c-.6.350-.85.700-.85 1.400" stroke-width="1.200"/></g><circle cy="3.300" r=".75" fill="#344563"/></svg>
<div class="t" style="left:257px;top:531.5px;font-size:14px;line-height:20px;color:#5e6c84;-webkit-text-stroke:.35px;letter-spacing:0.219px;">Zendesk Sell Leads</div>
<div class="b" style="left:233px;top:591.2px;width:812px;height:1.7px;background:#ebecf0;"></div>
<div class="t" style="left:978.5px;top:608px;font-size:14px;line-height:20px;color:#0052cc;letter-spacing:0.261px;">Cancel</div>
<div id="drop"></div>
<div class="t" style="left:410.1px;top:534.2px;font-size:14px;line-height:20px;color:#999;letter-spacing:0.259px;">Type to search</div>
<div class="b" style="left:973.300px;top:542.300px;width:0;height:0;border-left:5px solid transparent;border-right:5px solid transparent;border-bottom:5px solid #888"></div>
<div class="b" style="left:400px;top:560.2px;width:593px;height:1px;background:#ddd;"></div>
<div class="b" style="left:400px;top:561px;width:579px;height:35.8px;background:#f3f3f3;"></div>
<div class="b" style="left:979px;top:561px;width:14px;height:197.5px;background:#fafafa;border-left:1px solid #e8e8e8"></div>
<div class="b" style="left:983px;top:564px;width:7px;height:45px;background:#c1c1c1;border-radius:3.500px"></div>
<div class="t" style="left:410.6px;top:569.2px;font-size:14px;line-height:20px;color:#333;-webkit-text-stroke:.1px;letter-spacing:0.203px;">Bertha Boxer : bertha@fcof.net</div>
<div class="t" style="left:410.6px;top:605.2px;font-size:14px;line-height:20px;color:#333;-webkit-text-stroke:.1px;letter-spacing:0.292px;">Phyllis Cotton : pcotton@abbottins.net</div>
<div class="t" style="left:410.6px;top:641.2px;font-size:14px;line-height:20px;color:#333;-webkit-text-stroke:.1px;letter-spacing:0.224px;">Jeff Glimpse : jeffg@jackson.com</div>
<div class="t" style="left:410.6px;top:677.2px;font-size:14px;line-height:20px;color:#333;-webkit-text-stroke:.1px;letter-spacing:0.125px;">Mike Braund : likeb@metro.com</div>
<div class="t" style="left:410.6px;top:713.2px;font-size:14px;line-height:20px;color:#333;-webkit-text-stroke:.1px;letter-spacing:0.096px;">Patricia Feager : patricia_feager@is.com</div>
<div class="b" style="left:400px;top:745px;width:579px;height:13.500px;overflow:hidden"><div class="t" style="left:10.6px;top:4.2px;font-size:14px;line-height:20px;color:#333;-webkit-text-stroke:.1px;letter-spacing:0.157px;">Brenda Mcclure : brenda@cardinal.net</div>
</div>
</div>
</body></html>
